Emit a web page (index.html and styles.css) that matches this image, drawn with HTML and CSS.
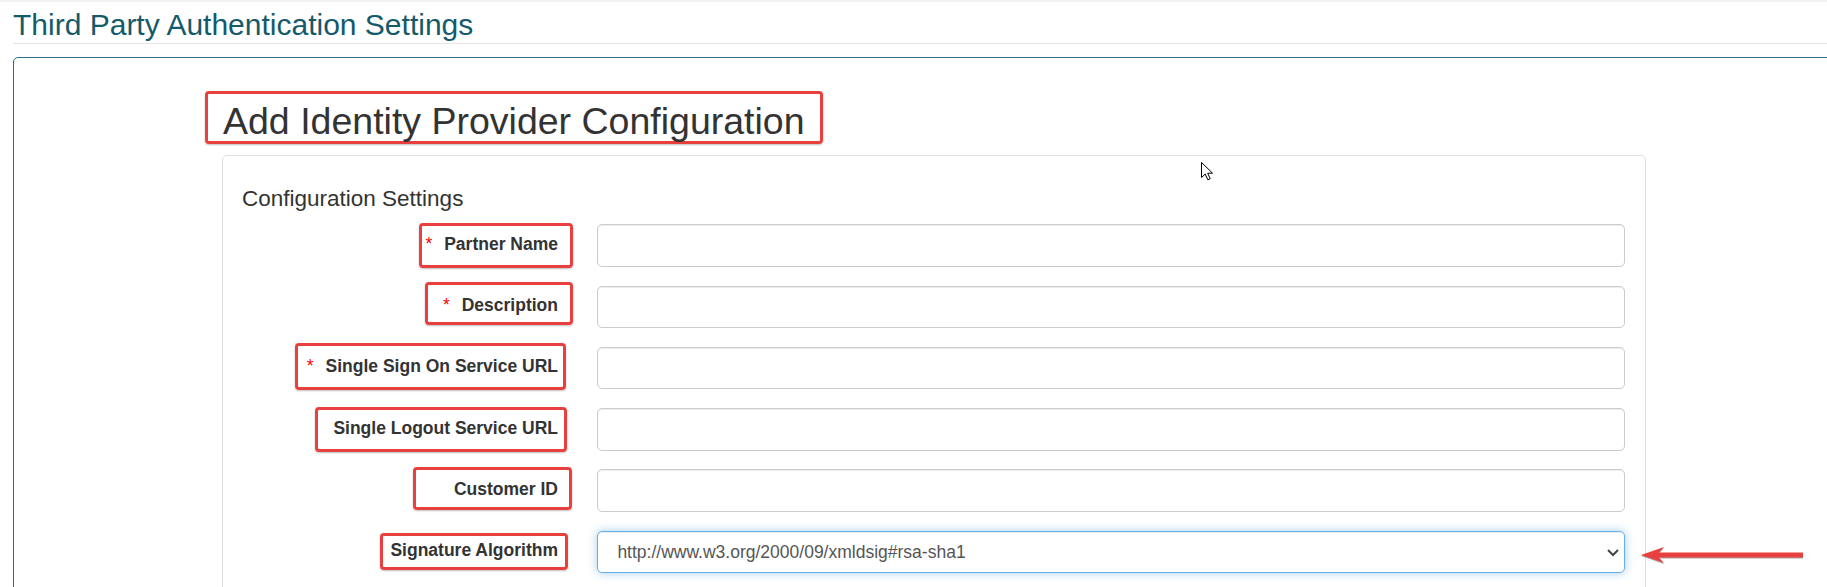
FILE: index.html
```html
<!DOCTYPE html>
<html lang="en">
<head>
<meta charset="utf-8">
<title>Third Party Authentication Settings</title>
<link rel="stylesheet" href="styles.css">
</head>
<body>
<div class="topbar"></div>
<div class="page">
  <h1 class="page-title">Third Party Authentication Settings</h1>
  <div class="panel">
    <div class="panel-body">
      <h2 class="heading"><span class="mark-heading">Add Identity Provider Configuration</span></h2>
      <div class="card">
        <h4 class="card-title">Configuration Settings</h4>
        <form class="form">
          <div class="form-row">
            <label class="label"><span class="mark m1"><span class="req">*</span>Partner Name</span></label>
            <input class="control" type="text">
          </div>
          <div class="form-row">
            <label class="label"><span class="mark m2"><span class="req">*</span>Description</span></label>
            <input class="control" type="text">
          </div>
          <div class="form-row">
            <label class="label"><span class="mark m3"><span class="req">*</span>Single Sign On Service URL</span></label>
            <input class="control" type="text">
          </div>
          <div class="form-row">
            <label class="label"><span class="mark m4">Single Logout Service URL</span></label>
            <input class="control" type="text">
          </div>
          <div class="form-row">
            <label class="label"><span class="mark m5">Customer ID</span></label>
            <input class="control" type="text">
          </div>
          <div class="form-row">
            <label class="label"><span class="mark m6">Signature Algorithm</span></label>
            <div class="select-wrap">
              <select class="control select">
                <option>http://www.w3.org/2000/09/xmldsig#rsa-sha1</option>
              </select>
              <svg class="chevron" width="12" height="8" viewBox="0 0 12 8"><polyline points="1,1 6,6 11,1" fill="none" stroke="#444" stroke-width="2"/></svg>
            </div>
          </div>
        </form>
      </div>
    </div>
  </div>
</div>
<svg class="cursor" width="14" height="20" viewBox="0 0 14 20"><path d="M0.5 0.5 L0.5 15.5 L4.2 12 L6.8 17.8 L9.2 16.8 L6.7 11.2 L11.6 11.2 Z" fill="#fff" stroke="#000" stroke-width="1" stroke-linejoin="miter"/></svg>
<svg class="red-arrow" width="164" height="18" viewBox="0 0 164 18"><path d="M0 8 L23 0 L18 5.5 L162 5.5 L162 10.5 L18 10.5 L23 16 Z" fill="#e8403f"/></svg>
</body>
</html>
```

FILE: styles.css
```css
html, body {
  margin: 0;
  padding: 0;
  overflow: hidden;
  background: #fff;
}

body {
  font-family: "Liberation Sans", Arial, sans-serif;
  color: #333;
  position: relative;
  width: 1827px;
  height: 587px;
}

.topbar {
  height: 2px;
  background: #f1f1f1;
}

.page {
  padding-left: 13px;
}

.page-title {
  margin: 5.5px 0 0 0;
  padding-bottom: 2.5px;
  font-size: 30px;
  line-height: 33px;
  font-weight: normal;
  color: #145a6b;
  border-bottom: 1px solid #e6e6e6;
}

.panel {
  margin-top: 13px;
  margin-right: -40px;
  border: 1px solid #2c6e85;
  border-top-left-radius: 5px;
  height: 700px;
}

.panel-body {
  padding: 33px 0 0 208px;
}

.heading {
  display: flex;
  margin: 0;
  font-size: 37.5px;
  line-height: 40px;
  font-weight: normal;
  color: #333;
}

.mark-heading {
  border: 3px solid #e8403f;
  border-radius: 4px;
  padding: 7px 15px 0 15px;
  margin-left: -17px;
  box-shadow: 0 1px 2px rgba(0, 0, 0, 0.25);
}

.card {
  margin-top: 11px;
  width: 1424px;
  box-sizing: border-box;
  border: 1px solid #dedede;
  border-radius: 5px;
  padding: 18px 20px 30px 19px;
  background: #fff;
}

.card-title {
  margin: 12px 0 13.3px 0;
  font-size: 22.5px;
  line-height: 25px;
  font-weight: normal;
  color: #333;
}

.form {
  margin: 0;
}

.form-row {
  display: grid;
  grid-template-columns: 336px 1fr;
  column-gap: 19px;
  height: 42.5px;
  margin-bottom: 18.75px;
}

.label {
  display: flex;
  justify-content: flex-end;
  align-items: flex-start;
  padding: 7.6px 20px 0 0;
  font-size: 17.5px;
  line-height: 25px;
  font-weight: bold;
  color: #333;
  white-space: nowrap;
}

.mark {
  display: block;
  border: 3px solid #e8403f;
  border-radius: 4px;
  box-shadow: 0 1px 2px rgba(0, 0, 0, 0.25);
}

.req {
  color: #ff0000;
  font-weight: normal;
  margin-right: 12px;
}

.m1 { margin: -8.6px -15.3px -10.8px 0; padding: 5.6px 12.3px 7.8px 3px; }
.m2 { margin: -11.5px -15px -6.8px 0; padding: 8.5px 12px 3.8px 14.6px; }
.m3 { margin: -11.7px -8px -10.6px 0; padding: 8.7px 5px 7.6px 8.3px; }
.m4 { margin: -9px -9.3px -11px 0; padding: 6px 6.3px 8px 15.3px; }
.m5 { margin: -10.2px -13.7px -8.1px 0; padding: 7.2px 10.7px 5.1px 37.7px; }
.m6 { margin: -5.5px -10.3px -6.9px 0; padding: 2.5px 7.3px 3.9px 7.3px; }

.control {
  display: block;
  width: 100%;
  height: 42.5px;
  box-sizing: border-box;
  margin: 0;
  padding: 7.5px 15px;
  border: 1px solid #ccc;
  border-radius: 5px;
  box-shadow: inset 0 1px 1px rgba(0, 0, 0, 0.075);
  background: #fff;
  font-family: "Liberation Sans", Arial, sans-serif;
  font-size: 17.5px;
  color: #555;
  outline: none;
}

.select-wrap {
  position: relative;
}

.select {
  -webkit-appearance: none;
  appearance: none;
  padding-left: 19.4px;
  border-color: #66afe9;
  box-shadow: inset 0 1px 1px rgba(0, 0, 0, 0.075), 0 0 10px rgba(102, 175, 233, 0.6);
}

.chevron {
  position: absolute;
  right: 6px;
  top: 18px;
}

.cursor {
  position: absolute;
  left: 1200.5px;
  top: 161.5px;
}

.red-arrow {
  position: absolute;
  left: 1641px;
  top: 546.5px;
  filter: drop-shadow(0 1px 0.6px rgba(0, 0, 0, 0.35));
}
```
